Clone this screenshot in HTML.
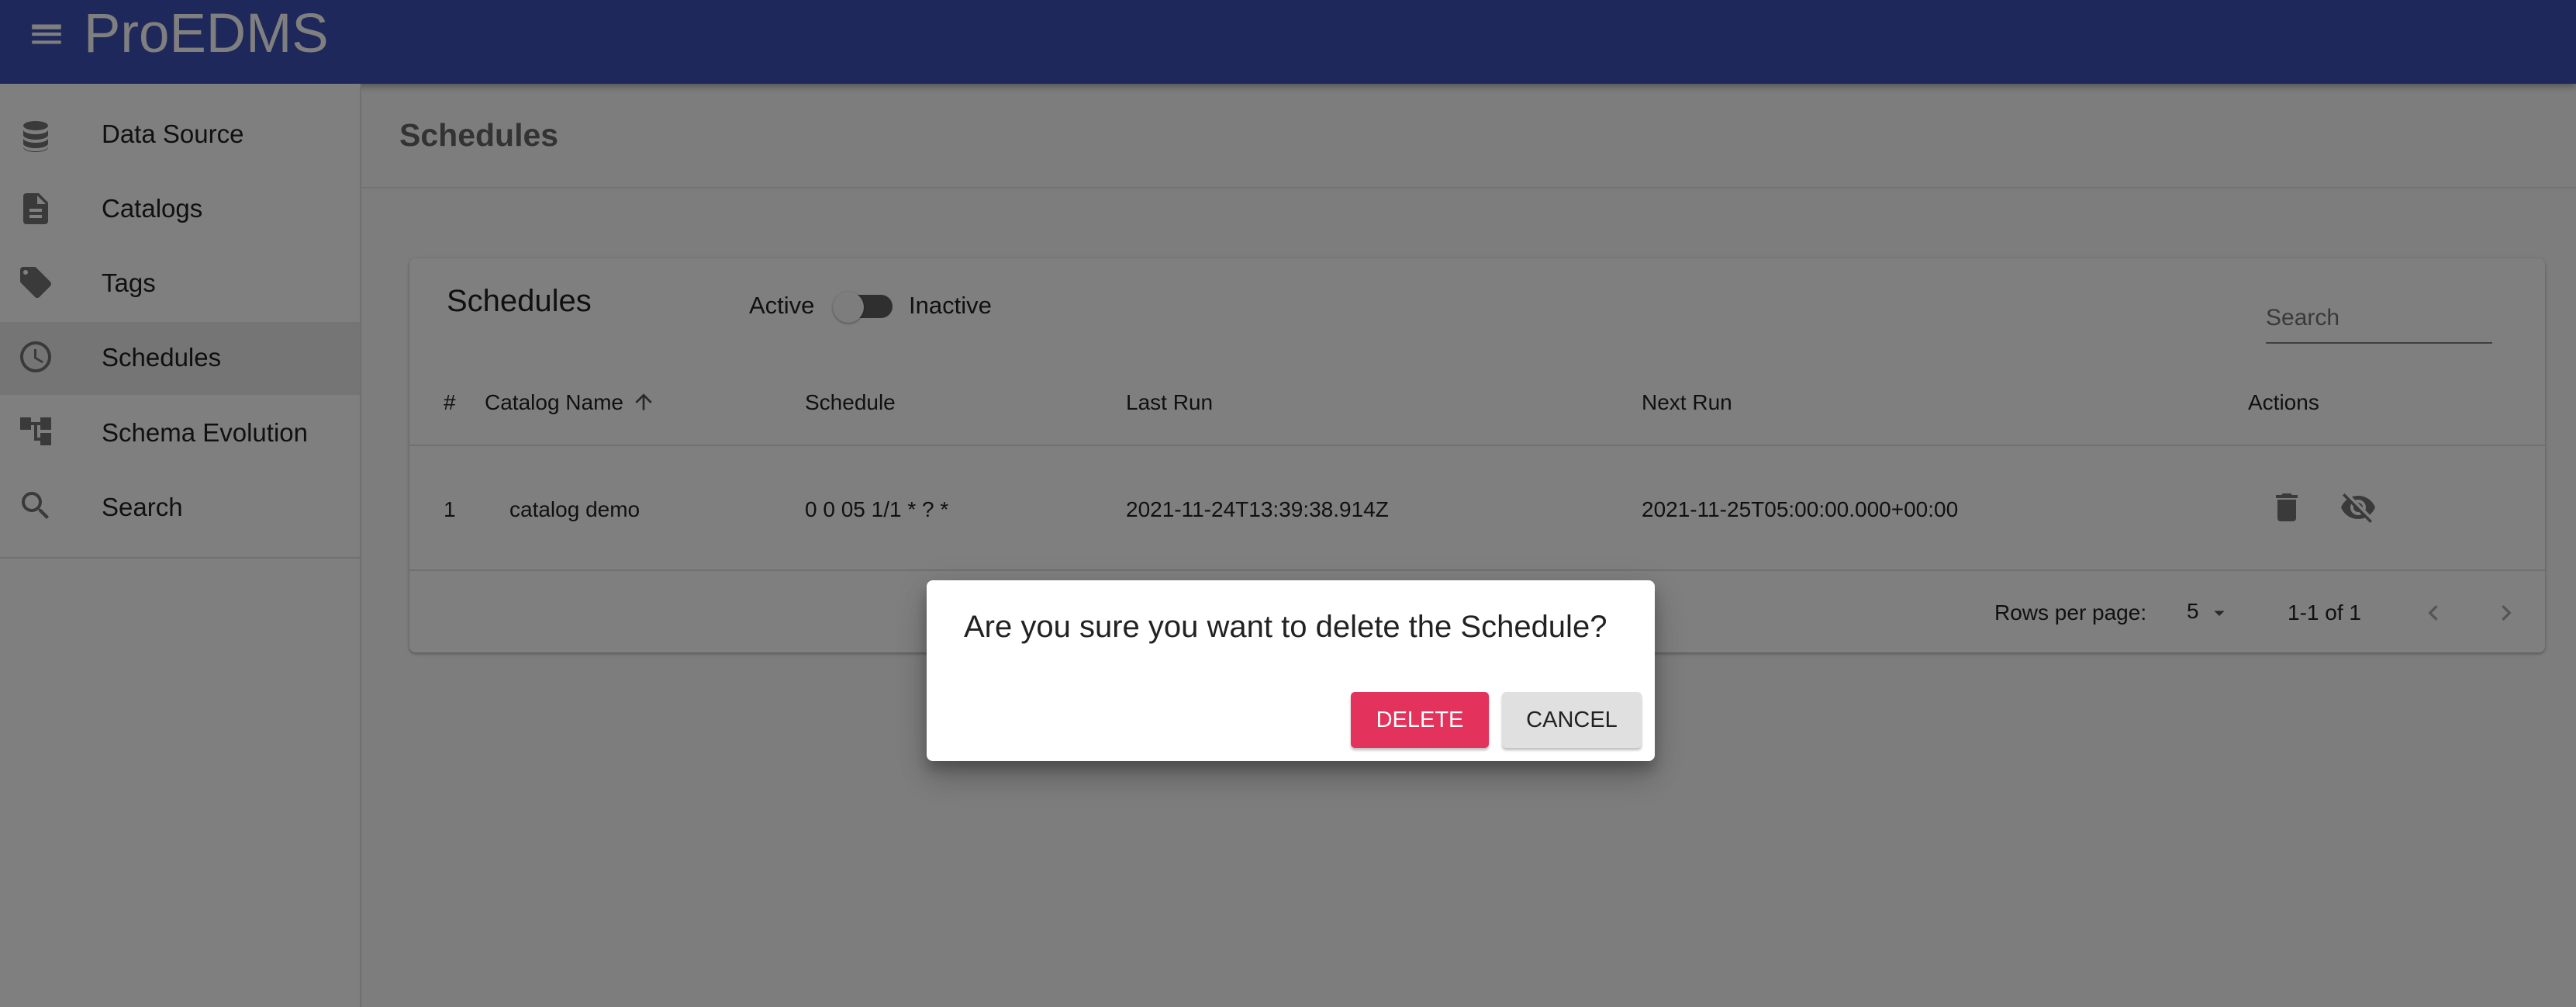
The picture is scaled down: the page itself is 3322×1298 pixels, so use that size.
<!DOCTYPE html>
<html><head><meta charset="utf-8"><style>
*{box-sizing:border-box;margin:0;padding:0}
body{width:3322px;height:1298px;overflow:hidden;background:#fafafa;font-family:"Liberation Sans",sans-serif;color:rgba(0,0,0,.87);position:relative}
.a{position:absolute;white-space:nowrap}
svg{display:block}
.hdr{left:0;top:0;width:3322px;height:108px;background:#3f51b5;box-shadow:0 4px 8px rgba(0,0,0,.3)}
.side{left:0;top:108px;width:466px;height:1190px;background:#fff;border-right:2px solid #e0e0e0}
.nav{font-size:33px;left:131px}
.ic{left:22px;fill:#757575}
.th{font-size:28px;top:503px}
.td{font-size:28px;top:641px}
.card{left:528px;top:333px;width:2754px;height:508px;background:#fff;border-radius:8px;box-shadow:0 2px 3px rgba(0,0,0,.2),0 1px 6px rgba(0,0,0,.14)}
.ov{left:0;top:0;width:3322px;height:1298px;background:rgba(0,0,0,.5)}
</style></head><body>
<div class="a hdr"></div>
<svg class="a" style="left:35px;top:19px" width="50" height="50" viewBox="0 0 24 24"><path fill="#fff" d="M3 18h18v-2H3v2zm0-5h18v-2H3v2zm0-6v2h18V6H3z"/></svg>
<div class="a" style="left:108px;top:3px;font-size:71px;color:#fff">ProEDMS</div>

<div class="a side"></div>
<div class="a" style="left:0;top:415px;width:464px;height:94px;background:#ebebeb"></div>
<div class="a" style="left:0;top:718px;width:464px;height:2px;background:#e0e0e0"></div>

<svg class="a ic" style="top:152px" width="48" height="48" viewBox="0 0 24 24"><ellipse cx="12" cy="5" rx="8" ry="3"/><path d="M4 7.5c0 1.7 3.6 3 8 3s8-1.3 8-3V11c0 1.7-3.6 3-8 3s-8-1.3-8-3zM4 13c0 1.7 3.6 3 8 3s8-1.3 8-3v3.5c0 1.7-3.6 3-8 3s-8-1.3-8-3zM4 18.5c0 1.7 3.6 3 8 3s8-1.3 8-3V19c0 1.7-3.6 3-8 3s-8-1.3-8-3z"/></svg>
<div class="a nav" style="top:154px">Data Source</div>
<svg class="a ic" style="top:245px" width="48" height="48" viewBox="0 0 24 24"><path d="M14 2H6c-1.1 0-1.99.9-1.99 2L4 20c0 1.1.89 2 1.990 2H18c1.1 0 2-.9 2-2V8l-6-6zm2 16H8v-2h8v2zm0-4H8v-2h8v2zm-3-5V3.5L18.5 9H13z"/></svg>
<div class="a nav" style="top:250px">Catalogs</div>
<svg class="a ic" style="top:340px" width="48" height="48" viewBox="0 0 24 24"><path d="M21.41 11.58l-9-9C12.05 2.22 11.55 2 11 2H4c-1.1 0-2 .9-2 2v7c0 .55.22 1.05.59 1.42l9 9c.36.36.86.58 1.41.58.55 0 1.05-.22 1.41-.59l7-7c.37-.36.59-.86.59-1.41 0-.55-.23-1.06-.59-1.42zM5.5 7C4.67 7 4 6.33 4 5.5S4.67 4 5.5 4 7 4.67 7 5.5 6.33 7 5.5 7z"/></svg>
<div class="a nav" style="top:346px">Tags</div>
<svg class="a ic" style="top:436px" width="48" height="48" viewBox="0 0 24 24"><path d="M11.99 2C6.47 2 2 6.48 2 12s4.47 10 9.99 10C17.52 22 22 17.52 22 12S17.52 2 11.99 2zM12 20c-4.42 0-8-3.58-8-8s3.58-8 8-8 8 3.58 8 8-3.58 8-8 8zm.5-13H11v6l5.25 3.15.75-1.23-4.5-2.67z"/></svg>
<div class="a nav" style="top:442px">Schedules</div>
<svg class="a ic" style="top:532px" width="48" height="48" viewBox="0 0 24 24"><path d="M22 11V3h-7v3H9V3H2v8h7V8h2v10h4v3h7v-8h-7v3h-2V8h2v3z"/></svg>
<div class="a nav" style="top:539px">Schema Evolution</div>
<svg class="a ic" style="top:628px" width="48" height="48" viewBox="0 0 24 24"><path d="M15.5 14h-.79l-.28-.27C15.41 12.59 16 11.11 16 9.5 16 5.91 13.09 3 9.5 3S3 5.91 3 9.5 5.91 16 9.5 16c1.61 0 3.09-.59 4.23-1.57l.27.28v.79l5 4.99L20.49 19l-4.99-5zm-6 0C7.01 14 5 11.99 5 9.5S7.01 5 9.5 5 14 7.01 14 9.5 11.99 14 9.5 14z"/></svg>
<div class="a nav" style="top:635px">Search</div>

<div class="a" style="left:515px;top:151px;font-size:41px;font-weight:bold;color:#666">Schedules</div>
<div class="a" style="left:466px;top:241px;width:2856px;height:2px;background:#e6e6e6"></div>

<div class="a card"></div>
<div class="a" style="left:576px;top:366px;font-size:40px">Schedules</div>
<div class="a" style="left:966px;top:376px;font-size:31px">Active</div>
<div class="a" style="left:1083px;top:380px;width:68px;height:30px;border-radius:15px;background:#2a2a2a;opacity:.75"></div>
<div class="a" style="left:1074px;top:376px;width:40px;height:40px;border-radius:50%;background:#fafafa;box-shadow:0 1px 3px rgba(0,0,0,.4)"></div>
<div class="a" style="left:1172px;top:376px;font-size:31px">Inactive</div>
<div class="a" style="left:2922px;top:393px;font-size:30px;color:rgba(0,0,0,.55)">Search</div>
<div class="a" style="left:2922px;top:441px;width:292px;height:2px;background:rgba(0,0,0,.5)"></div>

<div class="a th" style="left:572px">#</div>
<div class="a th" style="left:625px">Catalog Name</div>
<svg class="a" style="left:814px;top:502px" width="32" height="32" viewBox="0 0 24 24"><path fill="#555" d="M4 12l1.41 1.41L11 7.83V20h2V7.83l5.58 5.59L20 12l-8-8-8 8z"/></svg>
<div class="a th" style="left:1038px">Schedule</div>
<div class="a th" style="left:1452px">Last Run</div>
<div class="a th" style="left:2117px">Next Run</div>
<div class="a th" style="left:2899px">Actions</div>
<div class="a" style="left:528px;top:573px;width:2754px;height:2px;background:#e0e0e0"></div>
<div class="a td" style="left:572px">1</div>
<div class="a td" style="left:657px">catalog demo</div>
<div class="a td" style="left:1038px">0 0 05 1/1 * ? *</div>
<div class="a td" style="left:1452px">2021-11-24T13:39:38.914Z</div>
<div class="a td" style="left:2117px">2021-11-25T05:00:00.000+00:00</div>
<svg class="a" style="left:2925px;top:630px" width="48" height="48" viewBox="0 0 24 24"><path fill="#757575" d="M6 19c0 1.1.9 2 2 2h8c1.1 0 2-.9 2-2V7H6v12zM19 4h-3.5l-1-1h-5l-1 1H5v2h14V4z"/></svg>
<svg class="a" style="left:3017px;top:630px" width="48" height="48" viewBox="0 0 24 24"><path fill="#757575" d="M12 7c2.76 0 5 2.24 5 5 0 .65-.13 1.26-.36 1.83l2.92 2.92c1.51-1.26 2.7-2.89 3.43-4.75-1.73-4.39-6-7.5-11-7.5-1.4 0-2.74.25-3.98.7l2.16 2.16C10.74 7.13 11.35 7 12 7zM2 4.27l2.28 2.28.46.46C3.08 8.3 1.78 10.02 1 12c1.73 4.39 6 7.5 11 7.5 1.55 0 3.03-.3 4.38-.84l.42.42L19.73 22 21 20.73 3.27 3 2 4.27zM7.53 9.8l1.55 1.55c-.05.21-.08.43-.08.65 0 1.66 1.34 3 3 3 .22 0 .44-.03.65-.08l1.55 1.55c-.67.33-1.41.53-2.2.53-2.76 0-5-2.24-5-5 0-.79.2-1.53.53-2.2zm4.31-.78l3.15 3.15.02-.16c0-1.66-1.34-3-3-3l-.17.01z"/></svg>
<div class="a" style="left:528px;top:734px;width:2754px;height:2px;background:#e0e0e0"></div>
<div class="a" style="left:2572px;top:774px;font-size:28px">Rows per page:</div>
<div class="a" style="left:2820px;top:772px;font-size:28px">5</div>
<svg class="a" style="left:2846px;top:774px" width="32" height="32" viewBox="0 0 24 24"><path fill="#555" d="M7 10l5 5 5-5z"/></svg>
<div class="a" style="left:2950px;top:774px;font-size:28px">1-1 of 1</div>
<svg class="a" style="left:3118px;top:770px" width="40" height="40" viewBox="0 0 24 24"><path fill="#aaa" d="M15.41 7.41L14 6l-6 6 6 6 1.41-1.41L10.83 12z"/></svg>
<svg class="a" style="left:3212px;top:770px" width="40" height="40" viewBox="0 0 24 24"><path fill="#aaa" d="M10 6L8.59 7.41 13.17 12l-4.58 4.590L10 18l6-6z"/></svg>

<div class="a ov"></div>

<div class="a" style="left:1195px;top:748px;width:939px;height:233px;background:#fff;border-radius:8px;box-shadow:0 11px 15px rgba(0,0,0,.2),0 24px 38px rgba(0,0,0,.14),0 9px 46px rgba(0,0,0,.12)"></div>
<div class="a" style="left:1243px;top:786px;font-size:40px;color:#222">Are you sure you want to delete the Schedule?</div>
<div class="a" style="left:1742px;top:892px;width:178px;height:72px;background:#e3325b;border-radius:5px;box-shadow:0 3px 3px rgba(0,0,0,.25);color:#fff;font-size:29px;text-align:center;line-height:72px">DELETE</div>
<div class="a" style="left:1937px;top:892px;width:180px;height:72px;background:#e0e0e0;border-radius:5px;box-shadow:0 3px 3px rgba(0,0,0,.25);color:#222;font-size:29px;text-align:center;line-height:72px">CANCEL</div>
</body></html>
